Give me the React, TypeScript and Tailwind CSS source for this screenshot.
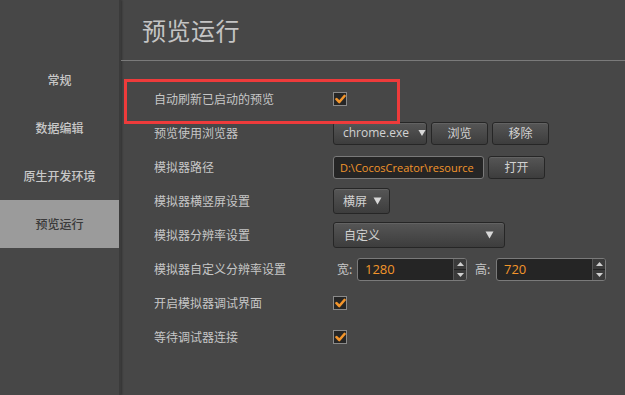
import React from 'react';

const FONT = "font-['Noto_Sans_CJK_SC','Noto_Sans',sans-serif]";
const LATIN = "font-['Open_Sans','Noto_Sans_CJK_SC',sans-serif]";

const NAV = ['常规', '数据编辑', '原生开发环境', '预览运行'];

const Check: React.FC = () => (
  <div className="w-[14px] h-[14px] border border-[#8a8a8a] bg-[#262626] flex items-center justify-center">
    <svg width="11" height="10" viewBox="0 0 11 10">
      <path d="M1.5 5.2 L4.3 8 L9.5 2" fill="none" stroke="#f3952b" strokeWidth="2.6" strokeLinecap="round" strokeLinejoin="round" />
    </svg>
  </div>
);

const btn =
  'h-[23px] rounded-[3px] border border-[#262626] bg-gradient-to-b from-[#565656] to-[#3d3d3d] shadow-[inset_0_1px_0_rgba(255,255,255,0.08)] text-[12px] text-[#d2d2d2] flex items-center';

const Arrow: React.FC = () => (
  <svg width="9" height="8" viewBox="0 0 9 8">
    <path d="M0.5 0.5 H8.5 L4.5 7.5 Z" fill="#d8d8d8" />
  </svg>
);

const Spin: React.FC<{ value: string }> = ({ value }) => (
  <div className="h-[23px] w-[110px] rounded-[3px] border border-[#7a7a7a] bg-[#252525] flex overflow-hidden">
    <div className={`flex-1 pl-[7px] text-[13px] text-[#f3952b] leading-[21px] ${LATIN}`}>{value}</div>
    <div className="w-[13px] border-l border-[#555] bg-[#3a3a3a] flex flex-col">
      <div className="flex-1 flex items-center justify-center border-b border-[#222]">
        <svg width="7" height="4" viewBox="0 0 7 4"><path d="M0 4 L3.5 0 L7 4 Z" fill="#cfcfcf" /></svg>
      </div>
      <div className="flex-1 flex items-center justify-center">
        <svg width="7" height="4" viewBox="0 0 7 4"><path d="M0 0 L7 0 L3.5 4 Z" fill="#cfcfcf" /></svg>
      </div>
    </div>
  </div>
);

const Row: React.FC<{ label: string; children: React.ReactNode }> = ({ label, children }) => (
  <div className="h-[34px] flex items-center">
    <div className="w-[179px] text-[12px] text-[#c6c6c6]">{label}</div>
    <div className="flex items-center gap-[4px]">{children}</div>
  </div>
);

export default function App() {
  return (
    <div className={`w-[625px] h-[395px] flex bg-[#474747] overflow-hidden ${FONT}`}>
      <aside className="w-[121px] h-full border-r-2 border-[#3b3b3b] shadow-[1px_0_2px_rgba(0,0,0,0.3)] pt-[56px] flex flex-col shrink-0">
        {NAV.map((item, i) => (
          <div
            key={item}
            className={`h-[48px] flex items-center justify-center text-[12px] font-medium ${
              i === 3 ? 'bg-[#9b9b9b] text-[#3a3a3a]' : 'text-[#c8c8c8]'
            }`}
          >
            {item}
          </div>
        ))}
      </aside>

      <main className="flex-1 relative">
        <header className="h-[61px] border-b border-[#7a7a7a] flex items-center pl-[21px]">
          <h1 className="text-[24px] text-[#c4c4c4] tracking-[0.5px]">预览运行</h1>
        </header>

        <div className="absolute left-[3px] top-[79px] w-[276px] h-[45px] border-[3px] border-[#ee3b3b]" />

        <div className="pt-[21px] pl-[33px]">
          <Row label="自动刷新已启动的预览">
            <Check />
          </Row>
          <Row label="预览使用浏览器">
            <div className={`${btn} w-[94px] pl-[9px] gap-[9px] text-[11.5px] ${LATIN}`}>
              <span>chrome.exe</span>
              <Arrow />
            </div>
            <div className={`${btn} w-[57px] justify-center`}>浏览</div>
            <div className={`${btn} w-[57px] justify-center`}>移除</div>
          </Row>
          <Row label="模拟器路径">
            <div className={`h-[23px] w-[151px] rounded-[3px] border border-[#7a7a7a] bg-[#252525] pl-[6px] text-[11px] text-[#f3952b] leading-[21px] whitespace-nowrap ${LATIN}`}>
              D:\CocosCreator\resource
            </div>
            <div className={`${btn} w-[57px] justify-center`}>打开</div>
          </Row>
          <Row label="模拟器横竖屏设置">
            <div className={`${btn} h-[26px] w-[57px] pl-[9px] gap-[6px]`}>
              <span>横屏</span>
              <Arrow />
            </div>
          </Row>
          <Row label="模拟器分辨率设置">
            <div className={`${btn} h-[26px] w-[172px] pl-[10px] pr-[10px] justify-between`}>
              <span>自定义</span>
              <Arrow />
            </div>
          </Row>
          <Row label="模拟器自定义分辨率设置">
            <div className="flex items-center">
              <span className="text-[12px] text-[#c6c6c6] pl-[4px] w-[24px]">宽:</span>
              <Spin value="1280" />
              <span className="text-[12px] text-[#c6c6c6] pl-[8px] w-[29px]">高:</span>
              <Spin value="720" />
            </div>
          </Row>
          <Row label="开启模拟器调试界面">
            <Check />
          </Row>
          <Row label="等待调试器连接">
            <Check />
          </Row>
        </div>
      </main>
    </div>
  );
}
